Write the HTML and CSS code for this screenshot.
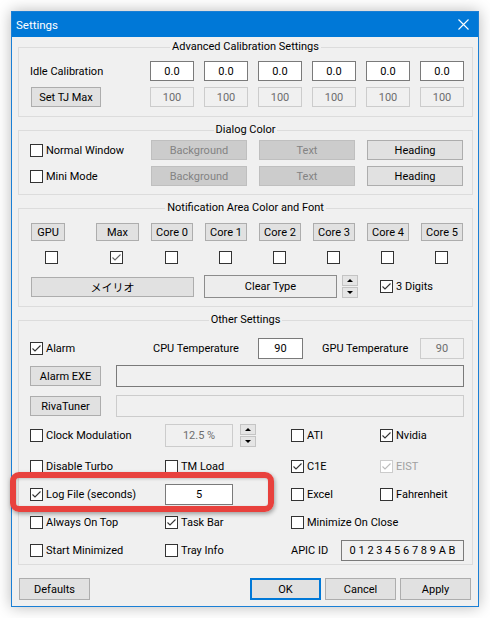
FILE: index.html
```html
<!DOCTYPE html>
<html lang="en">
<head>
<meta charset="utf-8">
<title>Settings</title>
<link rel="stylesheet" href="styles.css">
</head>
<body>
<div class="window">
  <div class="titlebar">
    <span class="title">Settings</span>
    <svg class="close" width="11" height="11" viewBox="0 0 11 11"><path d="M0.5 0.5 L10.5 10.5 M10.5 0.5 L0.5 10.5" stroke="#fff" stroke-width="1.1" fill="none"/></svg>
  </div>
  <div class="content">
    <div class="group g1">
      <div class="gtitle">Advanced Calibration Settings</div>
      <div class="calib">
        <span class="label">Idle Calibration</span>
        <span class="edit">0.0</span><span class="edit">0.0</span><span class="edit">0.0</span><span class="edit">0.0</span><span class="edit">0.0</span><span class="edit">0.0</span>
        <span class="btn tj">Set TJ Max</span>
        <span class="edit dis">100</span><span class="edit dis">100</span><span class="edit dis">100</span><span class="edit dis">100</span><span class="edit dis">100</span><span class="edit dis">100</span>
      </div>
    </div>

    <div class="group">
      <div class="gtitle">Dialog Color</div>
      <div class="dc">
        <span class="chk"><span class="box"></span>Normal Window</span>
        <span class="btn dis">Background</span><span class="btn dis">Text</span><span class="btn">Heading</span>
        <span class="chk"><span class="box"></span>Mini Mode</span>
        <span class="btn dis">Background</span><span class="btn dis">Text</span><span class="btn">Heading</span>
      </div>
    </div>

    <div class="group">
      <div class="gtitle">Notification Area Color and Font</div>
      <div class="notif">
        <div class="ncols">
          <span class="btn gpu">GPU</span>
          <span class="btn max">Max</span>
          <span class="btn core">Core 0</span>
          <span class="btn core">Core 1</span>
          <span class="btn core">Core 2</span>
          <span class="btn core">Core 3</span>
          <span class="btn core">Core 4</span>
          <span class="btn core">Core 5</span>
          <span class="cb"><span class="box"></span></span>
          <span class="cb"><span class="box on soft"><svg viewBox="0 0 11 11"><polyline points="1.5,5.5 4,8 9.5,2.5"/></svg></span></span>
          <span class="cb"><span class="box"></span></span>
          <span class="cb"><span class="box"></span></span>
          <span class="cb"><span class="box"></span></span>
          <span class="cb"><span class="box"></span></span>
          <span class="cb"><span class="box"></span></span>
          <span class="cb"><span class="box"></span></span>
        </div>
        <div class="frow">
          <span class="btn fontbtn">メイリオ</span>
          <span class="btn ctype">Clear Type</span>
          <span class="spin"><span class="sp up"></span><span class="sp down"></span></span>
          <span class="chk digits"><span class="box on"><svg viewBox="0 0 11 11"><polyline points="1.5,5.5 4,8 9.5,2.5"/></svg></span>3 Digits</span>
        </div>
      </div>
    </div>

    <div class="group">
      <div class="gtitle">Other Settings</div>
      <div class="other">
        <div class="orow r1">
          <span class="chk w-alarm"><span class="box on"><svg viewBox="0 0 11 11"><polyline points="1.5,5.5 4,8 9.5,2.5"/></svg></span>Alarm</span>
          <span class="label w-cpu">CPU Temperature</span>
          <span class="edit t90">90</span>
          <span class="label w-gpu">GPU Temperature</span>
          <span class="edit dis t90g">90</span>
        </div>
        <div class="orow r2">
          <span class="btn obtn">Alarm EXE</span>
          <span class="edit ro long"></span>
        </div>
        <div class="orow r3">
          <span class="btn obtn">RivaTuner</span>
          <span class="edit dis long"></span>
        </div>
        <div class="orow r4">
          <span class="cell c1"><span class="chk"><span class="box"></span>Clock Modulation</span></span>
          <span class="cell c2"><span class="edit dis pct">12.5 %</span><span class="spin small"><span class="sp up"></span><span class="sp down"></span></span></span>
          <span class="cell c3"><span class="chk"><span class="box"></span>ATI</span></span>
          <span class="cell c4"><span class="chk"><span class="box on"><svg viewBox="0 0 11 11"><polyline points="1.5,5.5 4,8 9.5,2.5"/></svg></span>Nvidia</span></span>
        </div>
        <div class="orow r5">
          <span class="cell c1"><span class="chk"><span class="box"></span>Disable Turbo</span></span>
          <span class="cell c2"><span class="chk"><span class="box"></span>TM Load</span></span>
          <span class="cell c3"><span class="chk"><span class="box on"><svg viewBox="0 0 11 11"><polyline points="1.5,5.5 4,8 9.5,2.5"/></svg></span>C1E</span></span>
          <span class="cell c4"><span class="chk disabled"><span class="box on"><svg viewBox="0 0 11 11"><polyline points="1.5,5.5 4,8 9.5,2.5"/></svg></span>EIST</span></span>
        </div>
        <div class="orow r6">
          <span class="cell c1"><span class="chk"><span class="box on"><svg viewBox="0 0 11 11"><polyline points="1.5,5.5 4,8 9.5,2.5"/></svg></span>Log File (seconds)</span></span>
          <span class="cell c2"><span class="edit pct">5</span></span>
          <span class="cell c3"><span class="chk"><span class="box"></span>Excel</span></span>
          <span class="cell c4"><span class="chk"><span class="box"></span>Fahrenheit</span></span>
        </div>
        <div class="orow r7">
          <span class="cell c1"><span class="chk"><span class="box"></span>Always On Top</span></span>
          <span class="cell c2"><span class="chk"><span class="box on"><svg viewBox="0 0 11 11"><polyline points="1.5,5.5 4,8 9.5,2.5"/></svg></span>Task Bar</span></span>
          <span class="cell c34"><span class="chk"><span class="box"></span>Minimize On Close</span></span>
        </div>
        <div class="orow r8">
          <span class="cell c1"><span class="chk"><span class="box"></span>Start Minimized</span></span>
          <span class="cell c2"><span class="chk"><span class="box"></span>Tray Info</span></span>
          <span class="cell apicl">APIC ID</span>
          <span class="edit ro apic">0 1 2 3 4 5 6 7 8 9 A B</span>
        </div>
      </div>
    </div>
  </div>
  <div class="footer">
    <span class="btn fbtn">Defaults</span>
    <span class="spacer"></span>
    <span class="btn fbtn default">OK</span>
    <span class="btn fbtn">Cancel</span>
    <span class="btn fbtn">Apply</span>
  </div>
</div>
<div class="highlight"></div>
</body>
</html>
```
FILE: styles.css
```css
* { box-sizing: border-box; }
html, body { margin: 0; background: #ffffff; }
body {
  padding: 11px;
  font-family: Roboto, "Noto Sans CJK JP", sans-serif;
  font-size: 11px;
  color: #000;
  position: relative;
}
.window {
  width: 468px;
  height: 596px;
  border: 1px solid #1a7fd5;
  background: #f0f0f0;
  box-shadow: 0 0 14px rgba(0,0,0,0.28);
  display: flex;
  flex-direction: column;
}
.titlebar {
  height: 25px;
  flex: none;
  background: #0078d7;
  color: #fff;
  display: flex;
  align-items: center;
  justify-content: space-between;
  padding: 0 9px 0 4px;
  font-size: 11.5px;
}
.close { display: block; }
.content { padding: 0 5px 0 6px; }
.group { border: 1px solid #dcdcdc; margin-top: 13px; }
.group.g1 { margin-top: 10px; }
.gtitle {
  width: fit-content;
  margin: -8px auto 0;
  padding: 0 2px;
  line-height: 14px;
  background: #f0f0f0;
}
.label { white-space: nowrap; }
.btn {
  display: inline-flex;
  align-items: center;
  justify-content: center;
  background: #e1e1e1;
  border: 1px solid #adadad;
  white-space: nowrap;
}
.btn.dis { background: #cccccc; border-color: #bfbfbf; color: #838383; }
.edit {
  display: inline-flex;
  align-items: center;
  justify-content: center;
  background: #fff;
  border: 1px solid #7a7a7a;
  white-space: nowrap;
}
.edit.dis { background: #f0f0f0; border-color: #cccccc; color: #6d6d6d; }
.edit.ro { background: #f0f0f0; }

.chk { display: inline-flex; align-items: center; white-space: nowrap; }
.box {
  width: 13px; height: 13px;
  border: 1px solid #333;
  background: #fff;
  margin-right: 3px;
  flex: none;
  display: inline-flex;
  align-items: center;
  justify-content: center;
}
.box svg { width: 11px; height: 11px; display: block; }
.box svg polyline { fill: none; stroke: #333; stroke-width: 1.1; }
.box.soft svg polyline { stroke: #666; }
.chk.disabled { color: #a0a0a0; }
.chk.disabled .box { border-color: #cccccc; }
.chk.disabled .box svg polyline { stroke: #bcbcbc; }

/* Group 1 */
.calib {
  display: grid;
  grid-template-columns: 110px repeat(6, 44px);
  column-gap: 10px;
  row-gap: 6px;
  grid-auto-rows: 20px;
  padding: 7px 0 9px 11px;
  align-items: stretch;
}
.calib .label { align-self: center; }
.btn.tj { width: 70px; margin-left: 1px; }

/* Group 2 */
.dc {
  display: grid;
  grid-template-columns: 109px 96px 96px 96px;
  column-gap: 12px;
  row-gap: 6px;
  grid-auto-rows: 20px;
  padding: 3px 0 8px 11px;
}

/* Group 3 */
.notif { padding: 8px 0 8px 12px; }
.ncols {
  display: grid;
  grid-template-columns: 65px 55px repeat(6, 54px);
  grid-template-rows: 18px 13px;
  row-gap: 10px;
}
.btn.gpu { width: 34px; }
.btn.max { width: 43px; }
.btn.core { width: 42px; }
.cb { display: flex; padding-left: 14px; }
.cb .box { margin: 0; }
.frow { display: flex; align-items: center; height: 23px; margin-top: 11px; }
.btn.fontbtn { width: 163px; height: 20px; }
.btn.ctype { width: 133px; height: 23px; margin-left: 10px; background: #ededed; border-color: #8c8c8c; }
.spin {
  display: inline-flex; flex-direction: column;
  width: 16px; height: 23px; margin-left: 5px;
  gap: 1px;
}
.sp {
  flex: 1;
  background: #e5e5e5;
  border: 1px solid #c4c4c4;
  display: flex; align-items: center; justify-content: center;
}
.sp.up::before {
  content: ""; border-left: 3px solid transparent; border-right: 3px solid transparent;
  border-bottom: 3px solid #000;
}
.sp.down::before {
  content: ""; border-left: 3px solid transparent; border-right: 3px solid transparent;
  border-top: 3px solid #000;
}
.chk.digits { margin-left: 22px; }

/* Group 4 */
.other { padding: 10px 0 3px 11px; }
.orow { display: flex; align-items: center; height: 22px; }
.orow.r2 { margin-top: 6px; }
.orow.r3 { margin-top: 8px; }
.orow.r4 { margin-top: 7px; height: 23px; }
.orow.r5 { margin-top: 8px; }
.orow.r6, .orow.r7, .orow.r8 { margin-top: 6px; }
.w-alarm { width: 123px; }
.w-cpu { width: 105px; }
.edit.t90 { width: 45px; height: 21px; }
.w-gpu { width: 98px; margin-left: 19px; }
.edit.t90g { width: 44px; height: 21px; }
.btn.obtn { width: 71px; height: 20px; }
.edit.long { width: 348px; height: 22px; margin-left: 15px; }
.cell { display: flex; align-items: center; height: 100%; }
.c1 { width: 135px; }
.c2 { width: 126px; }
.c3 { width: 89px; }
.c34 { width: 180px; }
.edit.pct { width: 68px; height: 21px; }
.orow.r4 .edit.pct { height: 23px; }
.spin.small { margin-left: 7px; }
.apicl { width: 50px; }
.edit.apic { width: 123px; height: 21px; }

/* Footer */
.footer { display: flex; gap: 4px; padding: 13px 7px 0 7px; }
.spacer { flex: 1; }
.btn.fbtn { width: 71px; height: 22px; }
.btn.default { border: 2px solid #0078d7; }

.highlight {
  position: absolute;
  left: 10px;
  top: 472px;
  width: 264px;
  height: 40px;
  border: 6px solid #e8413d;
  border-radius: 9px;
  box-shadow: 1px 2px 4px rgba(0,0,0,0.35), inset 1px 1px 3px rgba(0,0,0,0.2);
}
```
